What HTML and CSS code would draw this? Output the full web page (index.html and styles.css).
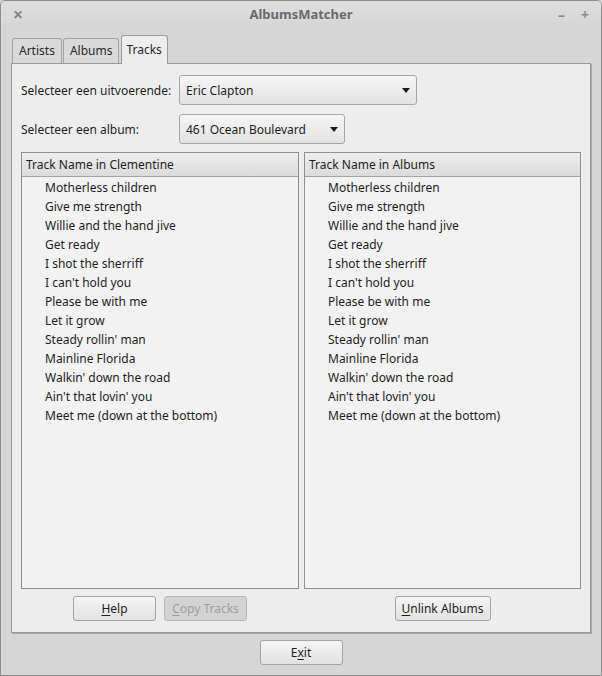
FILE: index.html
```html
<!DOCTYPE html>
<html>
<head>
<meta charset="utf-8">
<link rel="stylesheet" href="styles.css">
</head>
<body>
<div class="window">
  <div class="titlebar">
    <span class="tb-close">&#x2715;</span>
    <span class="title">AlbumsMatcher</span>
    <span class="tb-right"><span class="tb-min">&#x2013;</span><span class="tb-max">+</span></span>
  </div>
  <div class="body">
    <div class="tabs">
      <div class="tab">Artists</div>
      <div class="tab">Albums</div>
      <div class="tab active">Tracks</div>
    </div>
    <div class="pane">
      <div class="row">
        <span class="label">Selecteer een uitvoerende:</span>
        <div class="combo combo-artist"><span>Eric Clapton</span><span class="arrow"></span></div>
      </div>
      <div class="row">
        <span class="label">Selecteer een album:</span>
        <div class="combo combo-album"><span>461 Ocean Boulevard</span><span class="arrow"></span></div>
      </div>
      <div class="lists">
        <div class="list">
          <div class="list-head">Track Name in Clementine</div>
          <div class="list-body">
            <div class="item">Motherless children</div>
            <div class="item">Give me strength</div>
            <div class="item">Willie and the hand jive</div>
            <div class="item">Get ready</div>
            <div class="item">I shot the sherriff</div>
            <div class="item">I can't hold you</div>
            <div class="item">Please be with me</div>
            <div class="item">Let it grow</div>
            <div class="item">Steady rollin' man</div>
            <div class="item">Mainline Florida</div>
            <div class="item">Walkin' down the road</div>
            <div class="item">Ain't that lovin' you</div>
            <div class="item">Meet me (down at the bottom)</div>
          </div>
        </div>
        <div class="list">
          <div class="list-head">Track Name in Albums</div>
          <div class="list-body">
            <div class="item">Motherless children</div>
            <div class="item">Give me strength</div>
            <div class="item">Willie and the hand jive</div>
            <div class="item">Get ready</div>
            <div class="item">I shot the sherriff</div>
            <div class="item">I can't hold you</div>
            <div class="item">Please be with me</div>
            <div class="item">Let it grow</div>
            <div class="item">Steady rollin' man</div>
            <div class="item">Mainline Florida</div>
            <div class="item">Walkin' down the road</div>
            <div class="item">Ain't that lovin' you</div>
            <div class="item">Meet me (down at the bottom)</div>
          </div>
        </div>
      </div>
      <div class="buttons">
        <div class="btn-group">
          <button class="btn"><u>H</u>elp</button>
          <button class="btn disabled"><u>C</u>opy Tracks</button>
        </div>
        <div class="btn-group">
          <button class="btn btn-unlink"><u>U</u>nlink Albums</button>
        </div>
      </div>
    </div>
    <div class="footer">
      <button class="btn">E<u>x</u>it</button>
    </div>
  </div>
</div>
</body>
</html>
```
FILE: styles.css
```css
html, body {
  margin: 0;
  padding: 0;
  background: #d6d6d6;
}
body {
  font-family: "Noto Sans", "Open Sans", sans-serif;
  font-size: 12px;
  color: #1e1e1e;
}
.window {
  width: 602px;
  height: 676px;
  box-sizing: border-box;
  border: 1px solid #8e8e8e;
  border-radius: 5px 5px 0 0;
  background: #d6d6d6;
  display: flex;
  flex-direction: column;
  overflow: hidden;
}
.titlebar {
  height: 26px;
  flex: none;
  display: grid;
  grid-template-columns: 1fr auto 1fr;
  align-items: center;
  background: linear-gradient(#dedede, #d6d6d6);
  color: #6f6f72;
}
.tb-close {
  padding-left: 12px;
  font-size: 12px;
  font-weight: bold;
  color: #7e7e7e;
}
.title {
  font-weight: bold;
  font-size: 13px;
  color: #6a6a6e;
}
.tb-right {
  justify-self: end;
  display: flex;
  gap: 16px;
  padding-right: 12px;
  font-size: 14px;
  font-weight: bold;
  color: #8d8d8d;
}
.body {
  flex: 1;
  display: flex;
  flex-direction: column;
  padding: 7px 10px 0 10px;
}
.tabs {
  display: flex;
  align-items: flex-end;
  gap: 1px;
  padding-left: 1px;
  height: 29px;
  position: relative;
  z-index: 1;
}
.tab {
  height: 25px;
  box-sizing: border-box;
  padding: 0 6px;
  line-height: 23px;
  border: 1px solid #a4a4a4;
  border-bottom: none;
  border-radius: 3px 3px 0 0;
  background: #d9d9d9;
  font-size: 12px;
  color: #2a2a2a;
}
.tab.active {
  height: 29px;
  line-height: 28px;
  background: #ededed;
  margin-bottom: -1px;
  padding: 0 5px 0 4px;
  margin-left: 1px;
  border-color: #9c9c9c;
}
.pane {
  height: 570px;
  box-sizing: border-box;
  border: 1px solid #9a9a9a;
  box-shadow: 1px 1px 0 #a8a8a8;
  background: #ededed;
  padding: 11px 10px 0 9px;
  display: flex;
  flex-direction: column;
}
.row {
  display: flex;
  align-items: center;
  height: 30px;
  margin-bottom: 9px;
}
.label {
  width: 158px;
  flex: none;
  font-size: 12px;
}
.combo {
  height: 30px;
  box-sizing: border-box;
  border: 1px solid #a6a6a6;
  border-radius: 3px;
  background: linear-gradient(#f5f5f5, #e3e3e3);
  display: flex;
  align-items: center;
  justify-content: space-between;
  padding: 0 5px 0 6px;
  font-size: 12px;
}
.combo-artist { width: 238px; }
.combo-album { width: 166px; }
.arrow {
  width: 0;
  height: 0;
  border-left: 4px solid transparent;
  border-right: 4px solid transparent;
  border-top: 5px solid #1a1a1a;
  margin-right: 1px;
}
.lists {
  margin-top: -1px;
  display: grid;
  grid-template-columns: 278px 277px;
  gap: 5px;
  height: 437px;
}
.list {
  border: 1px solid #8f8f8f;
  background: #f2f2f2;
  display: flex;
  flex-direction: column;
  min-height: 0;
}
.list-head {
  height: 24px;
  box-sizing: border-box;
  line-height: 24px;
  padding-left: 4px;
  background: linear-gradient(#eeeeee, #dbdbdb);
  border-bottom: 1px solid #a2a2a2;
  font-size: 12px;
}
.list-body {
  padding-top: 1px;
}
.item {
  height: 19px;
  line-height: 19px;
  padding-left: 23px;
  font-size: 12px;
}
.buttons {
  display: grid;
  grid-template-columns: 278px 277px;
  gap: 5px;
  margin-top: 7px;
}
.btn-group {
  display: flex;
  justify-content: center;
  gap: 8px;
}
.btn {
  height: 25px;
  width: 83px;
  box-sizing: border-box;
  border: 1px solid #a4a4a4;
  border-radius: 3px;
  background: linear-gradient(#f5f5f5, #e2e2e2);
  font-family: "Noto Sans", "Open Sans", sans-serif;
  font-size: 12px;
  color: #1e1e1e;
  padding: 0;
  margin: 0;
}
.btn u {
  text-underline-offset: 2px;
}
.btn.disabled {
  background: #d3d3d3;
  border-color: #b8b8b8;
  color: #9e9e9e;
}
.btn-unlink {
  width: 96px;
}
.footer {
  display: flex;
  justify-content: center;
  padding-top: 7px;
}
```
